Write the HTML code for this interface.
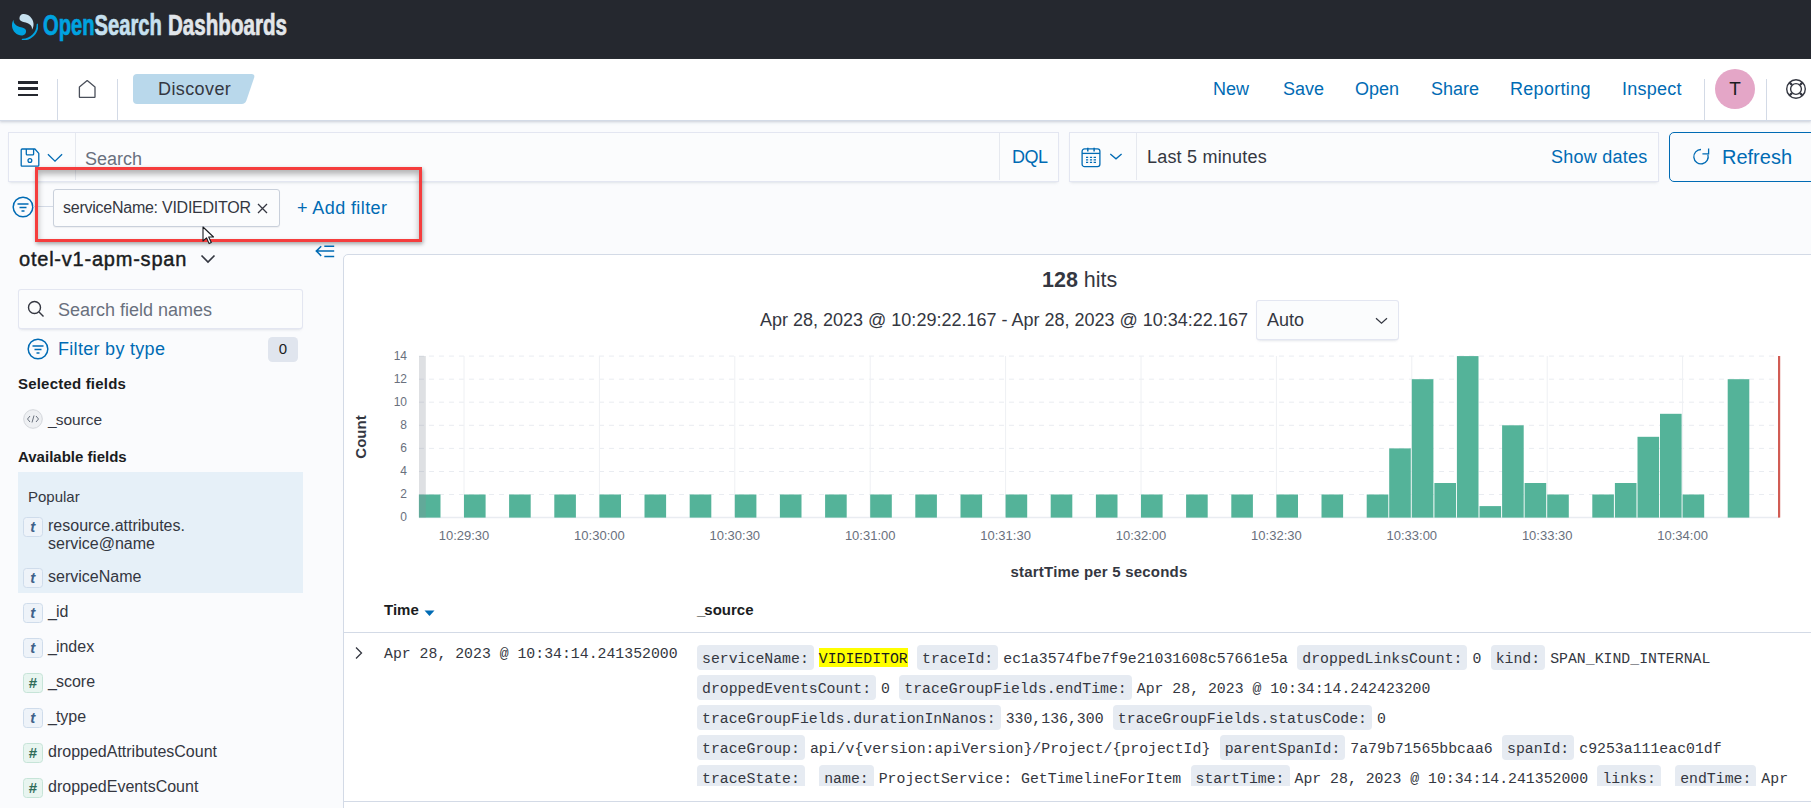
<!DOCTYPE html>
<html><head><meta charset="utf-8">
<style>
*{box-sizing:border-box;margin:0;padding:0}
html,body{width:1811px;height:808px;overflow:hidden;background:#fafbfd;font-family:"Liberation Sans",sans-serif;color:#343741}
.abs{position:absolute}
.mono{font-family:"Liberation Mono",monospace}
#hdr{left:0;top:0;width:1811px;height:59px;background:#25282f}
#nav{left:0;top:59px;width:1811px;height:62px;background:#fff;box-shadow:0 1px 2px rgba(152,162,179,.35),0 2px 3px rgba(152,162,179,.15);border-bottom:1px solid #d3dae6}
.sep{position:absolute;width:1px;background:#d3dae6}
.navlink{position:absolute;top:78px;font-size:18px;color:#006bb4;line-height:22px;white-space:nowrap}
.txt{position:absolute;white-space:nowrap}
.link{color:#006bb4}
.qbox{background:#fbfcfd;box-shadow:0 1px 2px -1px rgba(152,162,179,.2),0 3px 3px -2px rgba(152,162,179,.2),inset 0 0 0 1px rgba(17,43,134,.1)}
.tok{width:19.5px;height:19.5px;border-radius:3.5px;font-size:15px;line-height:18px;text-align:center;font-weight:bold;font-style:italic}
.tt{background:#eef3f9;border:1px solid #cfdceb;color:#40618a}
.tn{background:#e8f5f0;border:1px solid #c6e4d8;color:#2e6b58}
.fld{font-size:16px;line-height:18px;color:#343741;margin-top:0}
.srow{position:absolute;left:0;white-space:nowrap;font-family:"Liberation Mono",monospace;font-size:14.83px;line-height:24px;color:#343741}
.srow .k{display:inline-block;background:#e6ebf2;border-radius:4px;padding:2px 5px 0 5px;height:24.3px;line-height:24px;margin-right:5px;vertical-align:baseline}
.srow .v{margin-right:9.3px}
mark{display:inline-block;background:#ffff00;color:#1a1c21;line-height:16px;padding-top:3.3px;height:19.4px;vertical-align:baseline}
</style></head><body>
<div id="hdr" class="abs">
  <svg class="abs" style="left:11.5px;top:13.8px" width="26.5" height="26.5" viewBox="0 0 64 64"><path d="M61.7374 23.5C60.4878 23.5 59.4748 24.513 59.4748 25.7626C59.4748 44.3813 44.3813 59.4748 25.7626 59.4748C24.513 59.4748 23.5 60.4878 23.5 61.7374C23.5 62.987 24.513 64 25.7626 64C46.8805 64 64 46.8805 64 25.7626C64 24.513 62.987 23.5 61.7374 23.5Z" fill="#00a3e0"/><path d="M48.0814 38C50.2572 34.4505 52.3615 29.7178 51.9475 23.0921C51.0899 9.36725 38.6589-1.04463 26.9206.0837327C22.3253.525465 17.6068 4.2712 18.026 10.9805C18.2082 13.8961 19.6352 15.6169 21.9544 16.9399C24.1618 18.1992 26.9978 18.9969 30.2128 19.9011C34.0962 20.9934 38.6009 22.2203 42.063 24.7717C46.2125 27.8295 49.0491 31.3743 48.0814 38Z" fill="#c6e0ef"/><path d="M3.91861 14C1.74276 17.5495-.361506 22.2822.0524931 28.9079C.910072 42.6327 13.3411 53.0446 25.0794 51.9163C29.6747 51.4745 34.3932 47.7288 33.974 41.0195C33.7918 38.1039 32.3647 36.3831 30.0456 35.0601C27.8382 33.8008 25.0022 33.0031 21.7872 32.0989C17.9038 31.0066 13.3991 29.7797 9.93694 27.2283C5.78746 24.1705 2.95092 20.6257 3.91861 14Z" fill="#00a3e0"/></svg>
  <div class="txt" style="left:43px;top:10.5px;font-size:29px;font-weight:bold;line-height:29px;-webkit-text-stroke:.7px currentColor;transform:scaleX(.695);transform-origin:0 0"><span style="color:#00a3e0">Open</span><span style="color:#c6e0ef">Search</span></div><div class="txt" style="left:167.8px;top:10.5px;font-size:29px;font-weight:bold;line-height:29px;color:#e2e6ea;-webkit-text-stroke:.7px currentColor;transform:scaleX(.71);transform-origin:0 0">Dashboards</div>
</div>
<div id="nav" class="abs"></div>
<!-- hamburger -->
<div class="abs" style="left:18px;top:81.1px;width:20px;height:2.8px;background:#25282f"></div>
<div class="abs" style="left:18px;top:87.4px;width:20px;height:2.8px;background:#25282f"></div>
<div class="abs" style="left:18px;top:93.7px;width:20px;height:2.8px;background:#25282f"></div>
<div class="sep" style="left:57px;top:79px;height:41px"></div>
<svg class="abs" style="left:78px;top:79px" width="18" height="19" viewBox="0 0 18 19"><path d="M1.4 7.9 9.2 1.6 17 7.9v9.8c0 .5-.3.8-.8.8H2.2c-.5 0-.8-.3-.8-.8z" fill="none" stroke="#4a4f5a" stroke-width="1.3" stroke-linejoin="round"/></svg>
<div class="sep" style="left:117px;top:79px;height:41px"></div>
<svg class="abs" style="left:133px;top:74px" width="124" height="30" viewBox="0 0 124 30"><path d="M4 0H118.3c2.6 0 3.6 1.3 2.9 3.6L113.4 26.6c-.8 2.3-2.3 3.4-4.7 3.4H4c-2.5 0-4-1.5-4-4V4c0-2.5 1.5-4 4-4z" fill="#b9d8eb"/></svg>
<div class="txt" style="left:158px;top:78px;font-size:18px;line-height:22px;color:#343741;letter-spacing:.4px">Discover</div>

<div class="navlink" style="left:1213px">New</div>
<div class="navlink" style="left:1283px">Save</div>
<div class="navlink" style="left:1355px">Open</div>
<div class="navlink" style="left:1431px">Share</div>
<div class="navlink" style="left:1510px;letter-spacing:.3px">Reporting</div>
<div class="navlink" style="left:1622px;letter-spacing:.25px">Inspect</div>
<div class="sep" style="left:1704px;top:79px;height:41px"></div>
<div class="abs" style="left:1715px;top:69px;width:40px;height:40px;border-radius:50%;background:#e4a6c7;color:#1a1c21;font-size:19px;text-align:center;line-height:40px">T</div>
<div class="sep" style="left:1766px;top:79px;height:41px"></div>
<svg class="abs" style="left:1785px;top:78px" width="22" height="22" viewBox="0 0 22 22"><circle cx="11" cy="11" r="9.3" fill="none" stroke="#343741" stroke-width="1.4"/><circle cx="11" cy="11" r="5.4" fill="none" stroke="#343741" stroke-width="1.4"/><path d="M14.96 14.96L17.36 17.36M7.04 14.96L4.64 17.36M7.04 7.04L4.64 4.64M14.96 7.04L17.36 4.64" stroke="#343741" stroke-width="2.3"/></svg>

<!-- query bar -->
<div class="abs qbox" style="left:8px;top:132px;width:1051px;height:49.5px"></div>
<div class="sep" style="left:75px;top:133px;height:47px;background:#e6e9ef"></div>
<div class="sep" style="left:999px;top:133px;height:47px;background:#e6e9ef"></div>
<svg class="abs" style="left:20px;top:148px" width="20" height="20" viewBox="0 0 20 20"><path d="M2.2 1H14.9L18.8 5.4V17.2c0 .6-.4 1-1 1H2.2c-.6 0-1-.4-1-1V2c0-.6.4-1 1-1z" fill="none" stroke="#006bb4" stroke-width="1.3" stroke-linejoin="round"/><path d="M6.3 1V6c0 .5.3.9.9.9h5.6c.5 0 .8-.4.8-.9V1" fill="none" stroke="#006bb4" stroke-width="1.3"/><circle cx="9.9" cy="12.5" r="1.9" fill="none" stroke="#006bb4" stroke-width="1.3"/></svg>
<svg class="abs" style="left:47px;top:153px" width="17" height="10" viewBox="0 0 17 10"><path d="M.9 1.3 8 8.1l7.1-6.8" fill="none" stroke="#006bb4" stroke-width="1.3"/></svg>
<div class="txt" style="left:85px;top:148px;font-size:18px;line-height:22px;color:#69707d">Search</div>
<div class="txt link" style="left:1012px;top:146px;font-size:18px;line-height:22px;letter-spacing:-.5px">DQL</div>

<div class="abs qbox" style="left:1069px;top:132px;width:590px;height:49.5px"></div>
<div class="sep" style="left:1136px;top:133px;height:47px;background:#e6e9ef"></div>
<svg class="abs" style="left:1081px;top:147px" width="20" height="21" viewBox="0 0 20 21"><rect x="1.1" y="1.9" width="17.8" height="17.7" rx="2.4" fill="none" stroke="#006bb4" stroke-width="1.3"/><path d="M1.1 6.4h17.8" stroke="#006bb4" stroke-width="1.3"/><path d="M6.8.8v3.6M13.1.8v3.6" stroke="#006bb4" stroke-width="1.5"/><path d="M5 10.3h2.2M8.9 10.3h2.2M12.6 10.3h2.4M5 12.9h2.2M8.9 12.9h2.2M12.6 12.9h2.4M5 15.4h2.2M8.9 15.4h2.2M12.6 15.4h2.4" stroke="#006bb4" stroke-width="1.2"/></svg>
<svg class="abs" style="left:1109px;top:153px" width="14" height="8" viewBox="0 0 14 8"><path d="M1.3.9 7 5.8l5.6-4.9" fill="none" stroke="#006bb4" stroke-width="1.3"/></svg>
<div class="txt" style="left:1147px;top:146px;font-size:18px;line-height:22px;color:#343741;letter-spacing:.2px">Last 5 minutes</div>
<div class="txt link" style="left:1551px;top:146px;font-size:18px;line-height:22px;letter-spacing:.25px">Show dates</div>

<div class="abs" style="left:1669px;top:132px;width:160px;height:50px;border:1.5px solid #006bb4;border-radius:5px;background:#fafbfd"></div>
<svg class="abs" style="left:1690px;top:146px" width="22" height="22" viewBox="0 0 22 22"><path d="M11 3.5A7.2 7.2 0 1 0 17.9 8.6" fill="none" stroke="#006bb4" stroke-width="1.3"/><path d="M18.6 2.4V7.8H12.4" fill="none" stroke="#006bb4" stroke-width="1.3"/></svg>
<div class="txt link" style="left:1722px;top:145px;font-size:20px;line-height:24px">Refresh</div>

<!-- filter row -->
<svg class="abs" style="left:12px;top:196px" width="22" height="22" viewBox="0 0 22 22"><circle cx="11" cy="11" r="9.8" fill="none" stroke="#006bb4" stroke-width="1.5"/><path d="M5.5 8h11M7.5 11.5h7M9.5 15h3" stroke="#006bb4" stroke-width="1.5"/></svg>
<div class="abs" style="left:33px;top:206px;width:20px;height:1px;background:#d3dae6"></div>
<div class="abs" style="left:53px;top:189px;width:227px;height:38px;border:1px solid #c9d0db;border-radius:3px;background:#fbfcfd;box-shadow:0 1px 1px rgba(0,0,0,.05)"></div>
<div class="txt" style="left:63px;top:198px;font-size:16px;line-height:19px;color:#343741;letter-spacing:-.25px">serviceName: VIDIEDITOR</div>
<svg class="abs" style="left:257px;top:203px" width="11" height="11" viewBox="0 0 11 11"><path d="M1 1l9 9M10 1l-9 9" stroke="#343741" stroke-width="1.3"/></svg>
<div class="txt link" style="left:297px;top:197px;font-size:18px;line-height:22px;letter-spacing:.4px">+ Add filter</div>

<!-- red annotation -->
<div class="abs" style="left:35px;top:167px;width:387px;height:75px;border:3px solid #f53d3d;box-shadow:1px 2px 4px rgba(0,0,0,.35),inset 0 4px 6px rgba(0,0,0,.3)"></div>
<!-- cursor -->
<svg class="abs" style="left:202px;top:226px" width="14" height="20" viewBox="0 0 14 20"><path d="M1 1v14l3.5-3.2 2.6 5.8 2.2-1-2.6-5.6H11.5z" fill="#fff" stroke="#1a1c21" stroke-width="1.1" stroke-linejoin="round"/></svg>

<!-- sidebar -->
<div class="txt" style="left:19px;top:247.1px;font-size:20px;line-height:24px;color:#1a1c21;letter-spacing:.78px;-webkit-text-stroke:.45px #1a1c21">otel-v1-apm-span</div>
<svg class="abs" style="left:200px;top:254px" width="16" height="10" viewBox="0 0 16 10"><path d="M1.5 1.5l6.5 6.5 6.5-6.5" fill="none" stroke="#343741" stroke-width="1.7"/></svg>
<svg class="abs" style="left:315px;top:242px" width="21" height="18" viewBox="0 0 21 18"><path d="M1.3 9.1H19.2M9.3 4.2H19.2M9.3 14.4H19.2M6.2 4.3 1.3 9.1l4.9 4.8" fill="none" stroke="#006bb4" stroke-width="1.5"/></svg>
<div class="abs qbox" style="left:18px;top:289px;width:285px;height:40px;border-radius:3px"></div>
<svg class="abs" style="left:27px;top:300px" width="18" height="18" viewBox="0 0 18 18"><circle cx="7.5" cy="7.5" r="6" fill="none" stroke="#343741" stroke-width="1.4"/><path d="M12 12l4.5 4.5" stroke="#343741" stroke-width="1.4"/></svg>
<div class="txt" style="left:58px;top:299px;font-size:18px;line-height:22px;color:#69707d">Search field names</div>
<svg class="abs" style="left:27px;top:338px" width="22" height="22" viewBox="0 0 22 22"><circle cx="11" cy="11" r="9.8" fill="none" stroke="#006bb4" stroke-width="1.5"/><path d="M5.5 8h11M7.5 11.5h7M9.5 15h3" stroke="#006bb4" stroke-width="1.5"/></svg>
<div class="txt link" style="left:58px;top:338px;font-size:18px;line-height:22px;letter-spacing:.3px">Filter by type</div>
<div class="abs" style="left:268px;top:337px;width:30px;height:25px;border-radius:4.5px;background:#e0e5ee;font-size:15px;line-height:24px;text-align:center;color:#1a1c21">0</div>
<div class="txt" style="left:18px;top:375px;font-size:15px;line-height:18px;font-weight:bold;color:#1a1c21;letter-spacing:.2px">Selected fields</div>
<svg class="abs" style="left:23px;top:409px" width="20" height="20" viewBox="0 0 20 20"><circle cx="10" cy="10" r="9.3" fill="#eef0f3" stroke="#d3d6db" stroke-width="1"/><path d="M7 7 4.5 10 7 13M13 7l2.5 3L13 13M11 6.5 9 13.5" fill="none" stroke="#69707d" stroke-width="1"/></svg>
<div class="txt" style="left:48px;top:410px;font-size:15.5px;line-height:19px;color:#343741"><span style="letter-spacing:-1px">_</span>source</div>
<div class="txt" style="left:18px;top:448px;font-size:15px;line-height:18px;font-weight:bold;color:#1a1c21">Available fields</div>
<div class="abs" style="left:18px;top:472px;width:285px;height:121px;background:#e6f0f8"></div>
<div class="txt" style="left:28px;top:488px;font-size:15px;line-height:18px;color:#343741">Popular</div>
<div class="abs tok tt" style="left:23px;top:517px">t</div>
<div class="txt fld" style="left:48px;top:517px">resource.attributes.</div>
<div class="txt fld" style="left:48px;top:535px">service@name</div>
<div class="abs tok tt" style="left:23px;top:568px">t</div>
<div class="txt fld" style="left:48px;top:568px">serviceName</div>
<div class="abs tok tt" style="left:23px;top:603px">t</div>
<div class="txt fld" style="left:48px;top:603px"><span style="letter-spacing:-1px">_</span>id</div>
<div class="abs tok tt" style="left:23px;top:638px">t</div>
<div class="txt fld" style="left:48px;top:638px"><span style="letter-spacing:-1px">_</span>index</div>
<div class="abs tok tn" style="left:23px;top:673px">#</div>
<div class="txt fld" style="left:48px;top:673px"><span style="letter-spacing:-1px">_</span>score</div>
<div class="abs tok tt" style="left:23px;top:708px">t</div>
<div class="txt fld" style="left:48px;top:708px"><span style="letter-spacing:-1px">_</span>type</div>
<div class="abs tok tn" style="left:23px;top:743px">#</div>
<div class="txt fld" style="left:48px;top:743px">droppedAttributesCount</div>
<div class="abs tok tn" style="left:23px;top:778px">#</div>
<div class="txt fld" style="left:48px;top:778px">droppedEventsCount</div><!-- main panel -->
<div class="abs" style="left:343px;top:254px;width:1500px;height:600px;background:#fff;border:1px solid #d3dae6;border-radius:5px"></div>
<div class="txt" style="left:1042px;top:267px;font-size:21.5px;line-height:26px;color:#343741"><b>128</b> hits</div>
<div class="txt" style="left:760px;top:308.5px;font-size:18px;line-height:22px;color:#343741">Apr 28, 2023 @ 10:29:22.167 - Apr 28, 2023 @ 10:34:22.167</div>
<div class="abs qbox" style="left:1256px;top:300px;width:143px;height:40px;border-radius:3px"></div>
<div class="txt" style="left:1267px;top:309px;font-size:18px;line-height:22px;color:#343741">Auto</div>
<svg class="abs" style="left:1375px;top:317px" width="13" height="8" viewBox="0 0 13 8"><path d="M1 1.2l5.5 5L12 1.2" fill="none" stroke="#343741" stroke-width="1.2"/></svg>
<svg class="abs" style="left:0;top:0" width="1811" height="808" viewBox="0 0 1811 808">
<g font-family="Liberation Sans" font-size="12" fill="#69707d">
<line x1="419" y1="517.6" x2="1779" y2="517.6" stroke="#e9ecf1" stroke-width="1.5"/>
<text x="407" y="521.1" text-anchor="end">0</text>
<line x1="419" y1="494.5" x2="1779" y2="494.5" stroke="#e9ecf1" stroke-width="1" stroke-dasharray="5 5"/>
<text x="407" y="498.0" text-anchor="end">2</text>
<line x1="419" y1="471.5" x2="1779" y2="471.5" stroke="#e9ecf1" stroke-width="1" stroke-dasharray="5 5"/>
<text x="407" y="475.0" text-anchor="end">4</text>
<line x1="419" y1="448.4" x2="1779" y2="448.4" stroke="#e9ecf1" stroke-width="1" stroke-dasharray="5 5"/>
<text x="407" y="451.9" text-anchor="end">6</text>
<line x1="419" y1="425.3" x2="1779" y2="425.3" stroke="#e9ecf1" stroke-width="1" stroke-dasharray="5 5"/>
<text x="407" y="428.8" text-anchor="end">8</text>
<line x1="419" y1="402.2" x2="1779" y2="402.2" stroke="#e9ecf1" stroke-width="1" stroke-dasharray="5 5"/>
<text x="407" y="405.7" text-anchor="end">10</text>
<line x1="419" y1="379.2" x2="1779" y2="379.2" stroke="#e9ecf1" stroke-width="1" stroke-dasharray="5 5"/>
<text x="407" y="382.7" text-anchor="end">12</text>
<line x1="419" y1="356.1" x2="1779" y2="356.1" stroke="#e9ecf1" stroke-width="1" stroke-dasharray="5 5"/>
<text x="407" y="359.6" text-anchor="end">14</text>
<line x1="464.0" y1="356" x2="464.0" y2="517.6" stroke="#eef0f3" stroke-width="1"/>
<text x="464.0" y="540" text-anchor="middle" font-size="13">10:29:30</text>
<line x1="599.4" y1="356" x2="599.4" y2="517.6" stroke="#eef0f3" stroke-width="1"/>
<text x="599.4" y="540" text-anchor="middle" font-size="13">10:30:00</text>
<line x1="734.8" y1="356" x2="734.8" y2="517.6" stroke="#eef0f3" stroke-width="1"/>
<text x="734.8" y="540" text-anchor="middle" font-size="13">10:30:30</text>
<line x1="870.2" y1="356" x2="870.2" y2="517.6" stroke="#eef0f3" stroke-width="1"/>
<text x="870.2" y="540" text-anchor="middle" font-size="13">10:31:00</text>
<line x1="1005.6" y1="356" x2="1005.6" y2="517.6" stroke="#eef0f3" stroke-width="1"/>
<text x="1005.6" y="540" text-anchor="middle" font-size="13">10:31:30</text>
<line x1="1141.0" y1="356" x2="1141.0" y2="517.6" stroke="#eef0f3" stroke-width="1"/>
<text x="1141.0" y="540" text-anchor="middle" font-size="13">10:32:00</text>
<line x1="1276.4" y1="356" x2="1276.4" y2="517.6" stroke="#eef0f3" stroke-width="1"/>
<text x="1276.4" y="540" text-anchor="middle" font-size="13">10:32:30</text>
<line x1="1411.8" y1="356" x2="1411.8" y2="517.6" stroke="#eef0f3" stroke-width="1"/>
<text x="1411.8" y="540" text-anchor="middle" font-size="13">10:33:00</text>
<line x1="1547.2" y1="356" x2="1547.2" y2="517.6" stroke="#eef0f3" stroke-width="1"/>
<text x="1547.2" y="540" text-anchor="middle" font-size="13">10:33:30</text>
<line x1="1682.6" y1="356" x2="1682.6" y2="517.6" stroke="#eef0f3" stroke-width="1"/>
<text x="1682.6" y="540" text-anchor="middle" font-size="13">10:34:00</text>
</g>

<g fill="#54b399">
<rect x="418.9" y="494.5" width="21.6" height="23.1"/>
<rect x="464.0" y="494.5" width="21.6" height="23.1"/>
<rect x="509.1" y="494.5" width="21.6" height="23.1"/>
<rect x="554.3" y="494.5" width="21.6" height="23.1"/>
<rect x="599.4" y="494.5" width="21.6" height="23.1"/>
<rect x="644.5" y="494.5" width="21.6" height="23.1"/>
<rect x="689.7" y="494.5" width="21.6" height="23.1"/>
<rect x="734.8" y="494.5" width="21.6" height="23.1"/>
<rect x="779.9" y="494.5" width="21.6" height="23.1"/>
<rect x="825.1" y="494.5" width="21.6" height="23.1"/>
<rect x="870.2" y="494.5" width="21.6" height="23.1"/>
<rect x="915.3" y="494.5" width="21.6" height="23.1"/>
<rect x="960.5" y="494.5" width="21.6" height="23.1"/>
<rect x="1005.6" y="494.5" width="21.6" height="23.1"/>
<rect x="1050.7" y="494.5" width="21.6" height="23.1"/>
<rect x="1095.9" y="494.5" width="21.6" height="23.1"/>
<rect x="1141.0" y="494.5" width="21.6" height="23.1"/>
<rect x="1186.1" y="494.5" width="21.6" height="23.1"/>
<rect x="1231.3" y="494.5" width="21.6" height="23.1"/>
<rect x="1276.4" y="494.5" width="21.6" height="23.1"/>
<rect x="1321.5" y="494.5" width="21.6" height="23.1"/>
<rect x="1366.7" y="494.5" width="21.6" height="23.1"/>
<rect x="1389.2" y="448.4" width="21.6" height="69.2"/>
<rect x="1411.8" y="379.2" width="21.6" height="138.4"/>
<rect x="1434.4" y="483.0" width="21.6" height="34.6"/>
<rect x="1456.9" y="356.1" width="21.6" height="161.5"/>
<rect x="1479.5" y="506.1" width="21.6" height="11.5"/>
<rect x="1502.1" y="425.3" width="21.6" height="92.3"/>
<rect x="1524.6" y="483.0" width="21.6" height="34.6"/>
<rect x="1547.2" y="494.5" width="21.6" height="23.1"/>
<rect x="1592.3" y="494.5" width="21.6" height="23.1"/>
<rect x="1614.9" y="483.0" width="21.6" height="34.6"/>
<rect x="1637.5" y="436.8" width="21.6" height="80.8"/>
<rect x="1660.0" y="413.8" width="21.6" height="103.8"/>
<rect x="1682.6" y="494.5" width="21.6" height="23.1"/>
<rect x="1727.7" y="379.2" width="21.6" height="138.4"/>
</g>
<rect x="419" y="356" width="6.8" height="161.6" fill="#8a919c" opacity=".28"/>
<rect x="1778" y="356" width="2.2" height="161.6" fill="#d15c54"/>
<text x="366" y="437" transform="rotate(-90 366 437)" text-anchor="middle" font-family="Liberation Sans" font-weight="bold" font-size="15" fill="#343741">Count</text>
<text x="1099" y="577.3" text-anchor="middle" font-family="Liberation Sans" font-weight="bold" font-size="15" fill="#343741" letter-spacing=".2">startTime per 5 seconds</text>
</svg>
<!-- table -->
<div class="txt" style="left:384px;top:601px;font-size:15px;line-height:18px;font-weight:bold;color:#1a1c21">Time</div>
<svg class="abs" style="left:424px;top:610px" width="11" height="7" viewBox="0 0 11 7"><path d="M0.5 0.5h10L5.5 6z" fill="#006bb4"/></svg>
<div class="txt" style="left:697px;top:601px;font-size:15px;line-height:18px;font-weight:bold;color:#1a1c21"><span style="letter-spacing:-1px">_</span>source</div>
<div class="abs" style="left:344px;top:632px;width:1467px;height:1px;background:#d3dae6"></div>
<div class="abs" style="left:344px;top:801px;width:1467px;height:1px;background:#d3dae6"></div>
<svg class="abs" style="left:354px;top:646px" width="10" height="14" viewBox="0 0 10 14"><path d="M2 1.5l5.5 5.5L2 12.5" fill="none" stroke="#343741" stroke-width="1.3"/></svg>
<div class="txt mono" style="left:384px;top:645.4px;font-size:14.83px;line-height:18px;color:#343741">Apr 28, 2023 @ 10:34:14.241352000</div>
<div class="abs" style="left:697px;top:640px;width:1114px;height:146px;overflow:hidden">
<div class="srow" style="top:5.3px"><span class="k">serviceName:</span><span class="v"><mark>VIDIEDITOR</mark></span><span class="k">traceId:</span><span class="v">ec1a3574fbe7f9e21031608c57661e5a</span><span class="k">droppedLinksCount:</span><span class="v">0</span><span class="k">kind:</span><span class="v">SPAN_KIND_INTERNAL</span></div>
<div class="srow" style="top:35.3px"><span class="k">droppedEventsCount:</span><span class="v">0</span><span class="k">traceGroupFields.endTime:</span><span class="v">Apr 28, 2023 @ 10:34:14.242423200</span></div>
<div class="srow" style="top:65.3px"><span class="k">traceGroupFields.durationInNanos:</span><span class="v">330,136,300</span><span class="k">traceGroupFields.statusCode:</span><span class="v">0</span></div>
<div class="srow" style="top:95.3px"><span class="k">traceGroup:</span><span class="v">api/v{version:apiVersion}/Project/{projectId}</span><span class="k">parentSpanId:</span><span class="v">7a79b71565bbcaa6</span><span class="k">spanId:</span><span class="v">c9253a111eac01df</span></div>
<div class="srow" style="top:125.3px"><span class="k">traceState:</span><span class="v"></span><span class="k">name:</span><span class="v">ProjectService: GetTimelineForItem</span><span class="k">startTime:</span><span class="v">Apr 28, 2023 @ 10:34:14.241352000</span><span class="k">links:</span><span class="v"></span><span class="k">endTime:</span><span class="v">Apr</span></div>
</div>
</body></html>
